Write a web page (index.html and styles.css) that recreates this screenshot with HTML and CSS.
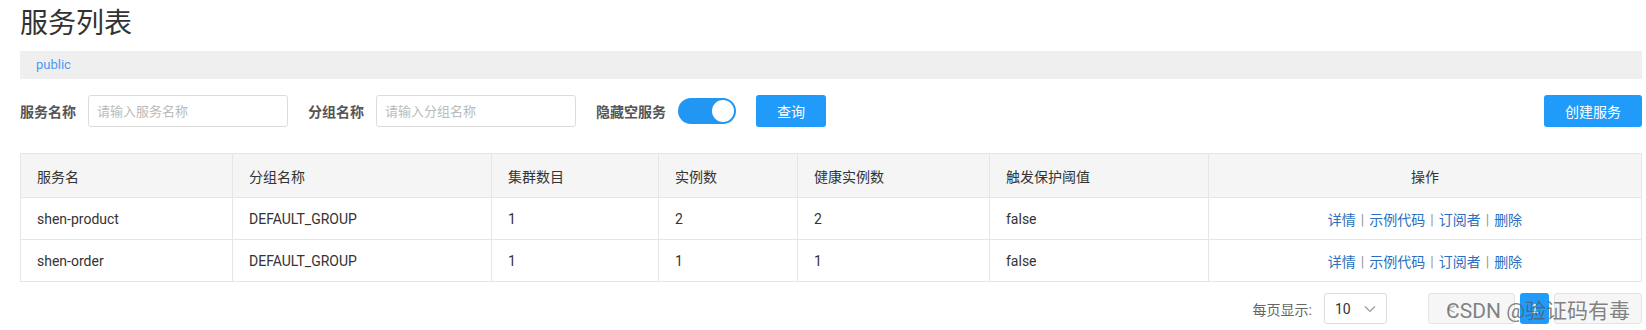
FILE: index.html
```html
<!DOCTYPE html>
<html lang="zh-CN">
<head>
    <meta charset="UTF-8">
    <title>服务列表</title>
    <link rel="stylesheet" href="styles.css">
</head>
<body>
    <div class="page">
        <h1 class="page-title">服务列表</h1>
        <div class="ns-bar"><a href="#">public</a></div>

        <div class="search-row">
            <label class="field-label">服务名称</label>
            <input class="field-input" type="text" placeholder="请输入服务名称">
            <label class="field-label">分组名称</label>
            <input class="field-input" type="text" placeholder="请输入分组名称">
            <label class="field-label">隐藏空服务</label>
            <span class="switch"><span class="switch-knob"></span></span>
            <button class="btn btn-primary">查询</button>
            <button class="btn btn-primary btn-right">创建服务</button>
        </div>

        <table class="svc-table">
            <colgroup>
                <col class="c1"><col class="c2"><col class="c3"><col class="c4"><col class="c5"><col class="c6"><col class="c7">
            </colgroup>
            <thead>
                <tr>
                    <th>服务名</th>
                    <th>分组名称</th>
                    <th>集群数目</th>
                    <th>实例数</th>
                    <th>健康实例数</th>
                    <th>触发保护阈值</th>
                    <th class="center">操作</th>
                </tr>
            </thead>
            <tbody>
                <tr>
                    <td>shen-product</td>
                    <td>DEFAULT_GROUP</td>
                    <td>1</td>
                    <td>2</td>
                    <td>2</td>
                    <td>false</td>
                    <td class="center ops">
                        <a href="#">详情</a><span class="sep">|</span><a href="#">示例代码</a><span class="sep">|</span><a href="#">订阅者</a><span class="sep">|</span><a href="#">删除</a>
                    </td>
                </tr>
                <tr>
                    <td>shen-order</td>
                    <td>DEFAULT_GROUP</td>
                    <td>1</td>
                    <td>1</td>
                    <td>1</td>
                    <td>false</td>
                    <td class="center ops">
                        <a href="#">详情</a><span class="sep">|</span><a href="#">示例代码</a><span class="sep">|</span><a href="#">订阅者</a><span class="sep">|</span><a href="#">删除</a>
                    </td>
                </tr>
            </tbody>
        </table>

        <div class="pager">
            <span class="pager-label">每页显示:</span>
            <div class="page-size">
                <span>10</span>
                <svg width="12" height="8" viewBox="0 0 12 8"><path d="M1 1.5 L6 6.5 L11 1.5" stroke="#999" stroke-width="1.2" fill="none"/></svg>
            </div>
            <button class="pg-btn pg-prev">&lt;</button>
            <button class="pg-num">1</button>
            <button class="pg-btn pg-next"></button>
            <span class="watermark">CSDN @验证码有毒</span>
        </div>
    </div>
</body>
</html>
```

FILE: styles.css
```css
body {
    margin: 0;
    padding: 0;
    background: #fff;
    font-family: Roboto, "Noto Sans CJK SC", sans-serif;
    color: #333;
}
.page {
    padding: 0 4px 0 20px;
}
.page-title {
    margin: 0;
    padding-top: 4px;
    height: 47px;
    font-size: 28px;
    line-height: 40px;
    font-weight: 400;
    color: #333;
}
.ns-bar {
    height: 28px;
    line-height: 28px;
    background: #efefef;
    padding-left: 16px;
    font-size: 13px;
}
.ns-bar a {
    color: #4a9af0;
    text-decoration: none;
}
/* filtros */
.search-row {
    display: flex;
    align-items: center;
    margin-top: 16px;
    height: 32px;
}
.field-label {
    font-size: 14px;
    font-weight: 700;
    color: #555;
    margin-right: 12px;
}
.field-input {
    width: 200px;
    height: 32px;
    box-sizing: border-box;
    border: 1px solid #dcdcdc;
    border-radius: 3px;
    padding: 0 8px;
    font-size: 13px;
    font-family: inherit;
    margin-right: 20px;
    outline: none;
}
.field-input::placeholder {
    color: #bbb;
}
.switch {
    width: 58px;
    height: 26px;
    border-radius: 13px;
    background: #2196f3;
    display: flex;
    align-items: center;
    justify-content: flex-end;
    padding-right: 2px;
    box-sizing: border-box;
    margin-right: 20px;
}
.switch-knob {
    width: 22px;
    height: 22px;
    border-radius: 50%;
    background: #fff;
}
.btn {
    height: 32px;
    border: none;
    border-radius: 3px;
    font-size: 14px;
    font-family: inherit;
    cursor: pointer;
    padding: 0 16px;
}
.btn-primary {
    background: #209bfa;
    color: #fff;
    min-width: 70px;
}
.btn-right {
    margin-left: auto;
    width: 98px;
}
/* tabela */
.svc-table {
    margin-top: 26px;
    width: 100%;
    border-collapse: collapse;
    font-size: 14px;
    table-layout: fixed;
}
.svc-table th, .svc-table td {
    border: 1px solid #e6e6e6;
    text-align: left;
    padding: 0 16px;
    font-weight: 400;
}
.svc-table th {
    background: #f5f5f5;
    height: 43px;
    color: #333;
}
.svc-table td {
    height: 41px;
    color: #333;
}
.svc-table .center {
    text-align: center;
}
.c1 { width: 212px; }
.c2 { width: 259px; }
.c3 { width: 167px; }
.c4 { width: 139px; }
.c5 { width: 192px; }
.c6 { width: 219px; }
.c7 { width: auto; }
.ops a {
    color: #2c6fbf;
    text-decoration: none;
}
.ops .sep {
    color: #999;
    margin: 0 5px;
}
/* paginacao */
.pager {
    position: relative;
    display: flex;
    justify-content: flex-end;
    align-items: center;
    margin-top: 11px;
    height: 31px;
}
.pager-label {
    font-size: 14px;
    color: #666;
    margin-right: 12px;
}
.page-size {
    width: 63px;
    height: 31px;
    box-sizing: border-box;
    border: 1px solid #dcdcdc;
    border-radius: 3px;
    display: flex;
    align-items: center;
    justify-content: space-between;
    padding: 0 10px;
    font-size: 14px;
    margin-right: 41px;
}
.pg-btn {
    width: 87px;
    height: 31px;
    border: 1px solid #e3e3e3;
    border-radius: 3px;
    background: #f6f6f6;
    color: #aaa;
    font-size: 14px;
    text-align: left;
    padding-left: 18px;
}
.pg-num {
    width: 29px;
    height: 31px;
    border: none;
    border-radius: 3px;
    background: #209bfa;
    color: #fff;
    font-size: 13px;
    margin: 0 5px;
}
.pg-next {
    width: 88px;
}
.watermark {
    position: absolute;
    right: 12px;
    top: 1px;
    font-size: 21px;
    color: rgba(90, 90, 90, 0.75);
    pointer-events: none;
}
```
